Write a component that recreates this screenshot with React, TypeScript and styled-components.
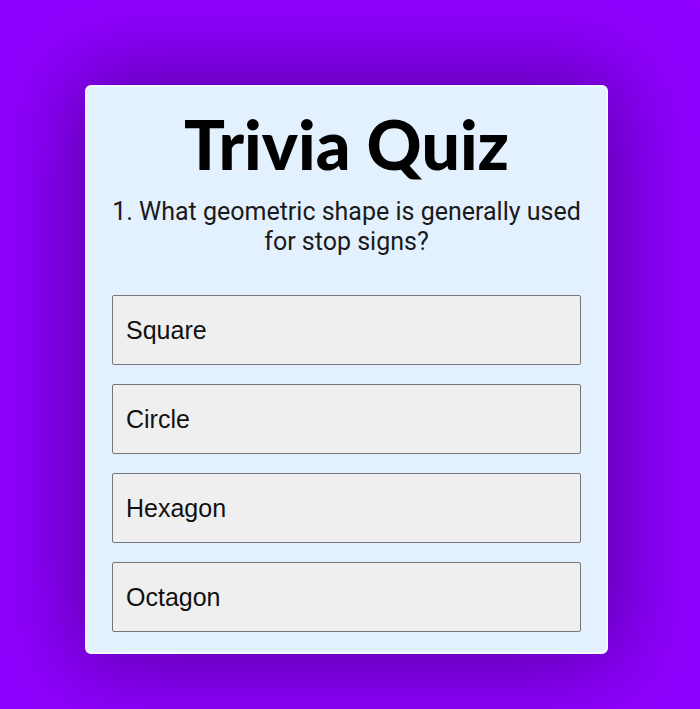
import React, { useState } from 'react';
import styled, { createGlobalStyle } from 'styled-components';

const GlobalStyle = createGlobalStyle`
  html, body {
    margin: 0;
    padding: 0;
    background: #8f00ff;
    min-height: 100vh;
  }
`;

const Page = styled.div`
  display: flex;
  justify-content: center;
  padding: 85px 7px 0 0;
  min-height: 709px;
  box-sizing: border-box;
`;

const Card = styled.div`
  width: 523px;
  height: 569px;
  box-sizing: border-box;
  background: #e3f1ff;
  border: 2px solid #f4f9ff;
  border-radius: 6px;
  padding: 14px 25px 20px;
  box-shadow: 0 0 90px 10px rgba(40, 0, 80, 0.55);
  display: flex;
  flex-direction: column;
`;

const Title = styled.h1`
  margin: 0;
  text-align: center;
  font-family: 'Lato', 'Noto Sans', sans-serif;
  font-weight: 900;
  font-size: 68px;
  line-height: 86px;
  color: #000;
`;

const Question = styled.p`
  margin: 10px 0 0;
  text-align: center;
  font-family: 'Roboto', sans-serif;
  font-size: 25px;
  line-height: 30px;
  color: #1a1a1a;
`;

const Options = styled.div`
  display: flex;
  flex-direction: column;
  gap: 19px;
  margin-top: 38px;
`;

const Option = styled.button<{ $picked: boolean }>`
  height: 70px;
  width: 100%;
  text-align: left;
  padding: 0 13px;
  background: ${(p) => (p.$picked ? '#e4e4e4' : '#efefef')};
  border: 1px solid #767676;
  border-radius: 2px;
  font-family: 'Liberation Sans', Arial, sans-serif;
  font-size: 25px;
  color: #111;
  cursor: pointer;
`;

const answers = ['Square', 'Circle', 'Hexagon', 'Octagon'];

const App = () => {
  const [picked, setPicked] = useState<number | null>(null);

  return (
    <>
      <GlobalStyle />
      <Page>
        <Card>
          <Title>Trivia Quiz</Title>
          <Question>1. What geometric shape is generally used for stop signs?</Question>
          <Options>
            {answers.map((a, i) => (
              <Option key={a} $picked={picked === i} onClick={() => setPicked(i)}>
                {a}
              </Option>
            ))}
          </Options>
        </Card>
      </Page>
    </>
  );
};

export default App;
